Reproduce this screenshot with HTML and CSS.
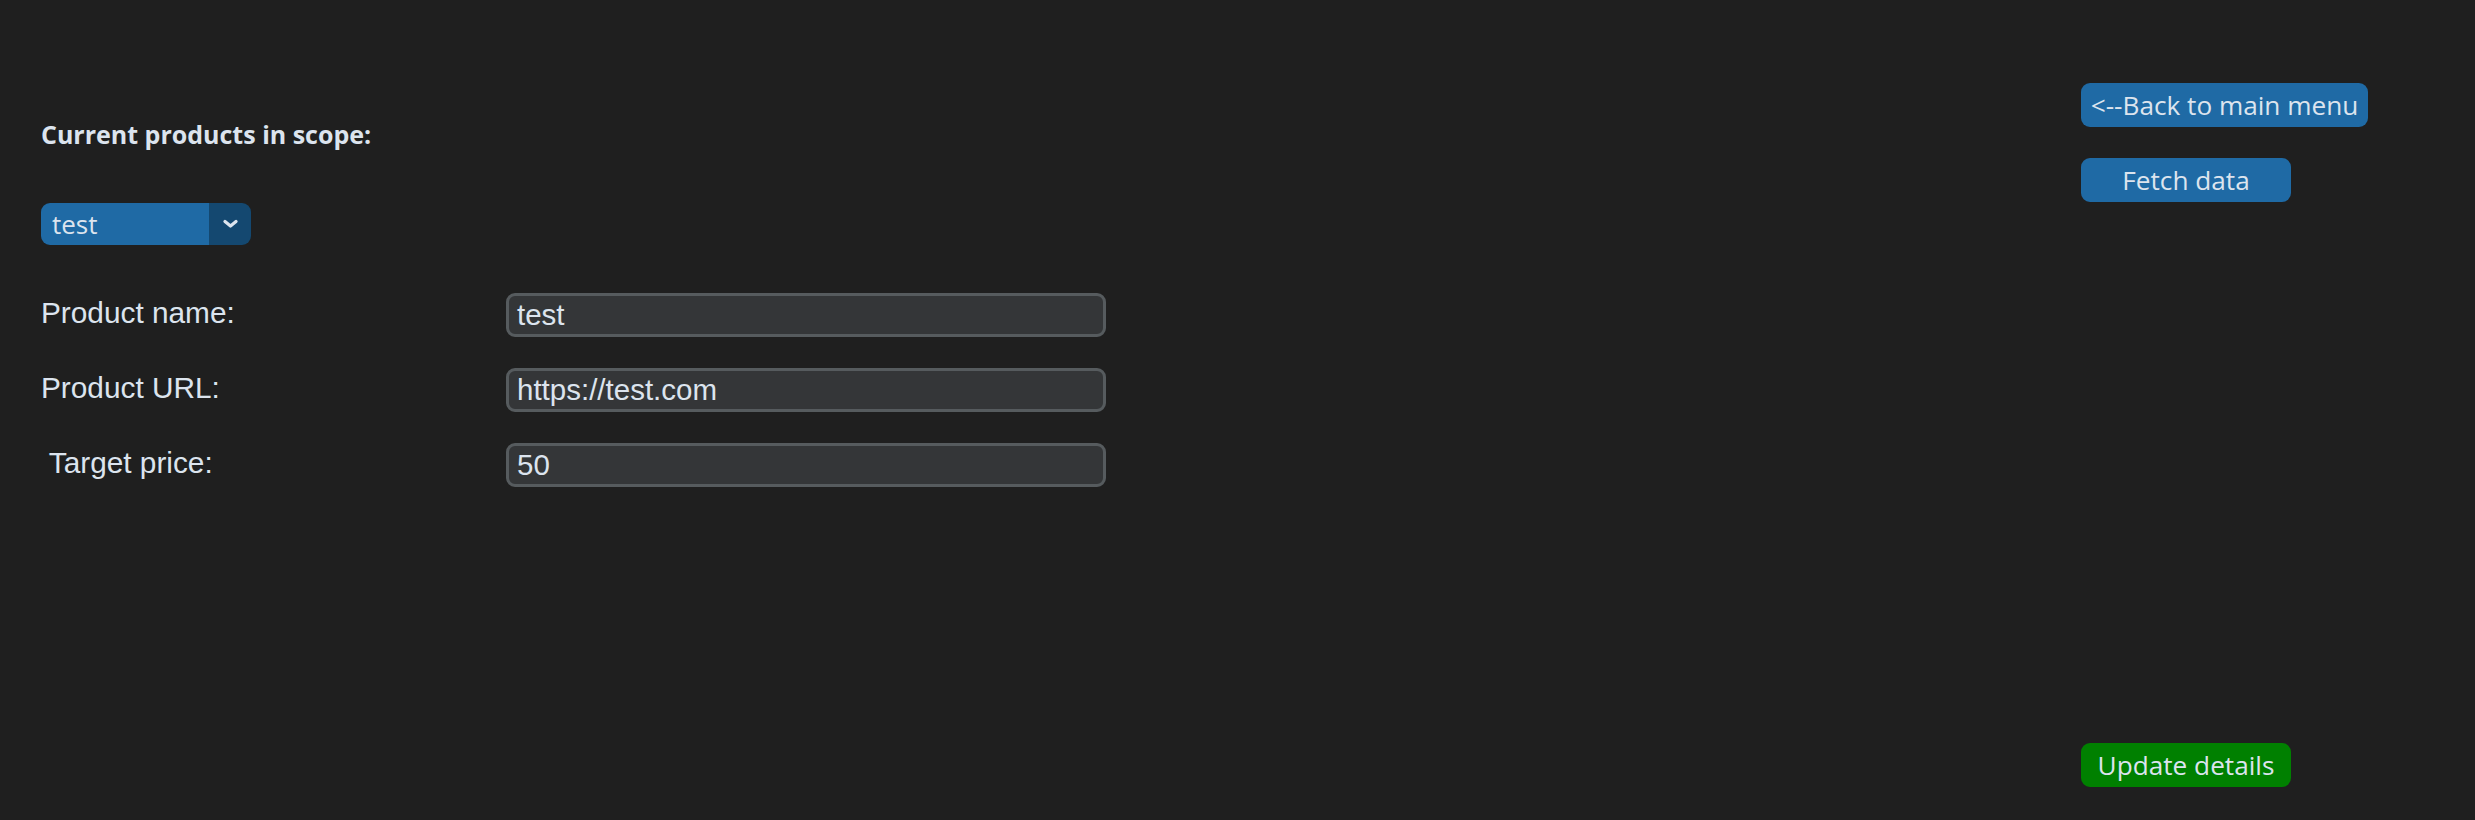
FILE: index.html
```html
<!DOCTYPE html>
<html lang="en">
<head>
<meta charset="utf-8">
<title>Products</title>
<link rel="stylesheet" href="styles.css">
</head>
<body>
<div class="page">
  <main class="left">
    <h1 class="heading">Current products in scope:</h1>
    <div class="dropdown">
      <span class="dropdown-value">test</span>
      <span class="dropdown-arrow">
        <svg width="15" height="10" viewBox="0 0 15 10"><polyline points="2,2.5 7.5,7 13,2.5" fill="none" stroke="#DCE4EE" stroke-width="3.2" stroke-linecap="round" stroke-linejoin="round"/></svg>
      </span>
    </div>
    <div class="form">
      <label class="label">Product name:</label>
      <div class="entry">test</div>
      <label class="label">Product URL:</label>
      <div class="entry">https://test.com</div>
      <label class="label"> Target price:</label>
      <div class="entry">50</div>
    </div>
  </main>
  <aside class="right">
    <button class="btn btn-wide">&lt;--Back to main menu</button>
    <button class="btn">Fetch data</button>
    <button class="btn btn-green">Update details</button>
  </aside>
</div>
</body>
</html>
```
FILE: styles.css
```css
html, body {
  margin: 0;
  padding: 0;
  background: #1f1f1f;
}
.page {
  display: flex;
  height: 820px;
  padding-left: 41px;
  box-sizing: border-box;
  color: #DCE4EE;
}
.left {
  flex: 1;
  display: flex;
  flex-direction: column;
  align-items: flex-start;
  padding-top: 118px;
}
.heading {
  margin: 0;
  font-family: "Open Sans", sans-serif;
  font-weight: 700;
  font-size: 25px;
  line-height: 32px;
  color: #DCE4EE;
}
.dropdown {
  margin-top: 53px;
  display: flex;
  width: 210px;
  height: 42px;
  border-radius: 9px;
  overflow: hidden;
  font-family: "Open Sans", sans-serif;
  font-size: 26px;
}
.dropdown-value {
  flex: 1;
  background: #1f6aa5;
  padding-left: 11px;
  line-height: 42px;
}
.dropdown-arrow {
  width: 42px;
  background: #144870;
  display: flex;
  align-items: center;
  justify-content: center;
}
.form {
  margin-top: 48px;
  display: grid;
  grid-template-columns: 465px 600px;
  row-gap: 31px;
  align-items: center;
}
.label {
  font-family: "Liberation Sans", Arial, sans-serif;
  font-size: 29.8px;
  white-space: pre;
  margin-top: -4px;
}
.entry {
  box-sizing: border-box;
  height: 44px;
  border: 3px solid #565b5e;
  border-radius: 9px;
  background: #343638;
  padding-left: 8px;
  font-family: "Liberation Sans", Arial, sans-serif;
  font-size: 29.5px;
  line-height: 38px;
}
.right {
  width: 394px;
  display: flex;
  flex-direction: column;
  align-items: flex-start;
  padding-top: 83px;
  gap: 31px;
}
.btn {
  width: 210px;
  height: 44px;
  border: none;
  border-radius: 9px;
  background: #1f6aa5;
  color: #DCE4EE;
  font-family: "Open Sans", sans-serif;
  font-size: 26.2px;
  padding: 0;
  white-space: nowrap;
}
.btn-wide {
  width: 287px;
}
.btn-green {
  background: #008000;
  margin-top: auto;
  margin-bottom: 33px;
}
```
